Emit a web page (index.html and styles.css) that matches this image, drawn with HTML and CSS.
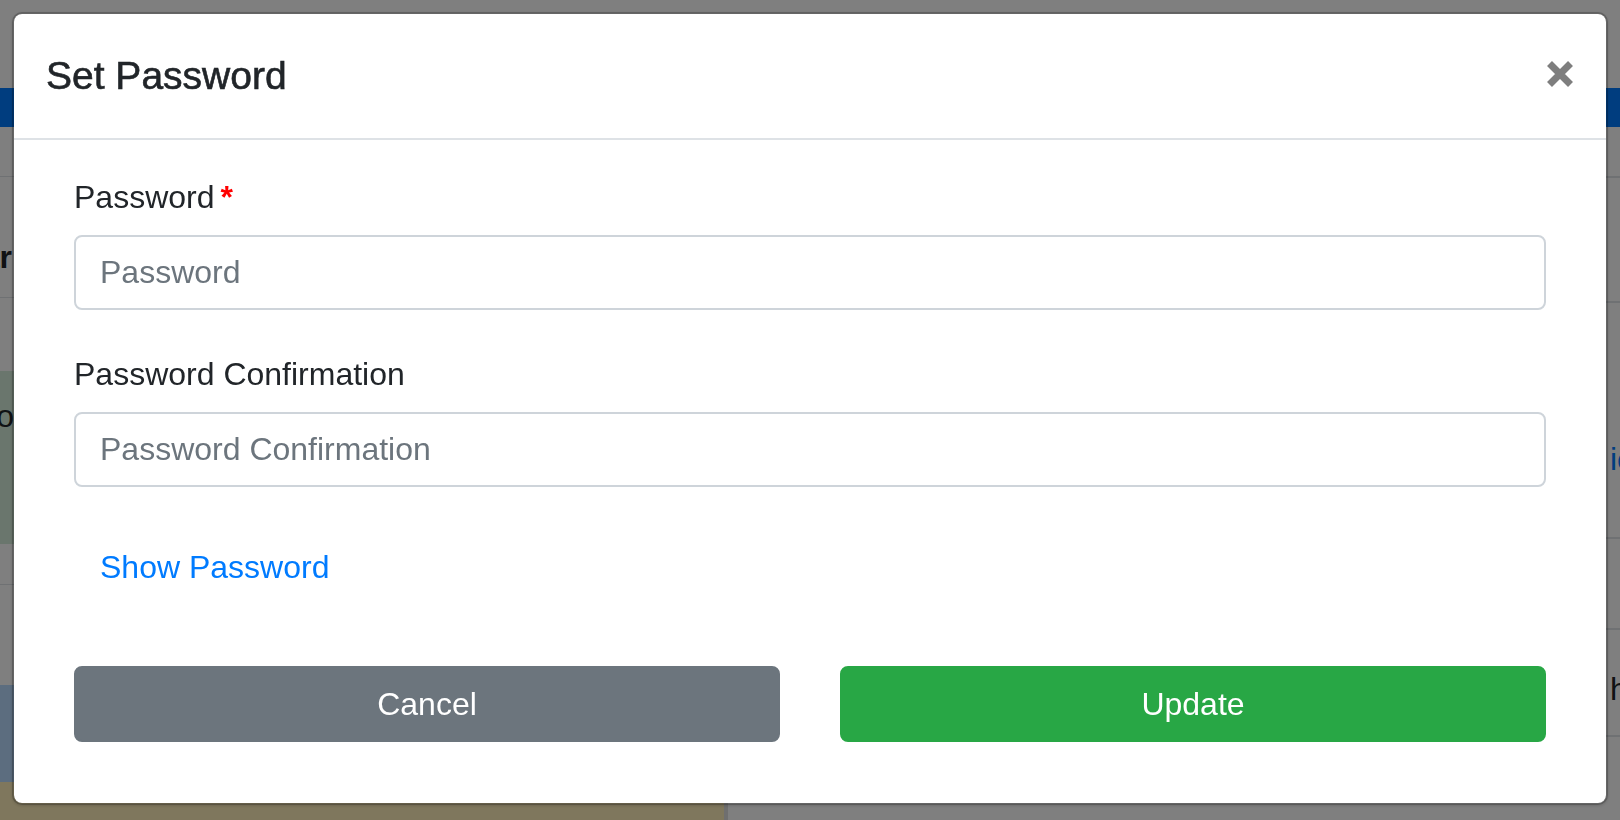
FILE: index.html
```html
<!DOCTYPE html>
<html lang="en">
<head>
<meta charset="utf-8">
<title>Set Password</title>
<link rel="stylesheet" href="styles.css">
</head>
<body>
<div class="page">
  <div class="topbar"></div>
  <div class="navbar"></div>
  <div class="content">
    <div class="col-left">
      <div class="row row-a"></div>
      <div class="row row-b"><span class="peek bold">Calendar</span></div>
      <div class="row row-c"></div>
      <div class="row row-green"><span class="peek">Do</span></div>
      <div class="row row-d"></div>
      <div class="row row-e"></div>
      <div class="row row-info"></div>
      <div class="row row-warn"></div>
    </div>
    <div class="col-mid"></div>
    <div class="col-right">
      <div class="rrow rrow-a"></div>
      <div class="rrow rrow-b"></div>
      <div class="rrow rrow-c"><span class="link-peek">ic</span></div>
      <div class="rrow rrow-d"></div>
      <div class="rrow rrow-e"><span class="text-peek">h</span></div>
      <div class="rrow rrow-f"></div>
    </div>
  </div>
</div>

<div class="overlay">
  <div class="modal">
    <div class="modal-header">
      <h5 class="modal-title">Set Password</h5>
      <button class="close" type="button" aria-label="Close">
        <svg class="close-icon" width="28" height="28" viewBox="0 0 28 28">
          <path d="M3.5 2.5 L24.5 23.5 M24.5 2.5 L3.5 23.5" stroke="#000" stroke-width="7" stroke-linecap="butt" fill="none"/>
        </svg>
      </button>
    </div>
    <div class="modal-body">
      <form class="form">
        <div class="form-group">
          <label class="label">Password<span class="req">*</span></label>
          <input class="input" type="password" placeholder="Password">
        </div>
        <div class="form-group">
          <label class="label">Password Confirmation</label>
          <input class="input" type="password" placeholder="Password Confirmation">
        </div>
        <button class="btn-link" type="button">Show Password</button>
        <div class="actions">
          <button class="btn btn-secondary" type="button">Cancel</button>
          <button class="btn btn-success" type="button">Update</button>
        </div>
      </form>
    </div>
  </div>
</div>
</body>
</html>
```

FILE: styles.css
```css
* { box-sizing: border-box; }

html, body {
  margin: 0;
  padding: 0;
  width: 1620px;
  height: 820px;
  overflow: hidden;
}

body {
  font-family: "Liberation Sans", Arial, Helvetica, sans-serif;
  color: #212529;
  background: #ffffff;
}

/* ---------- background page (behind overlay) ---------- */
.page {
  width: 1620px;
  height: 820px;
  display: flex;
  flex-direction: column;
}

.topbar { height: 88px; background: #ffffff; }
.navbar { height: 39px; background: #007bff; }

.content {
  flex: 1;
  display: flex;
}

.col-left {
  width: 724px;
  display: flex;
  flex-direction: column;
}

.row { display: flex; justify-content: flex-end; overflow: hidden; }
.row-a { height: 50px; border-bottom: 1px solid #dee2e6; }
.row-b { height: 121px; border-bottom: 1px solid #dee2e6; align-items: flex-start; padding-top: 60px; padding-right: 712px; }
.row-c { height: 73px; }
.row-green { height: 173px; background: #d4edda; align-items: flex-start; padding-top: 25px; padding-right: 710px; }
.row-d { height: 41px; border-bottom: 1px solid #dee2e6; }
.row-e { height: 100px; }
.row-info { height: 97px; background: #b8daff; }
.row-warn { flex: 1; background: #ffeeba; }

.peek {
  font-size: 32px;
  line-height: 40px;
  white-space: nowrap;
  color: #212529;
}
.peek.bold { font-weight: 700; }

.col-mid {
  width: 101px;
  display: flex;
  border-left: 2px solid #dedede;
}

.col-right {
  flex: 1;
  display: flex;
  flex-direction: column;
  border-left: 2px solid #dedede;
}

.rrow { border-bottom: 2px solid #dee2e6; display: flex; align-items: center; padding-left: 882px; overflow: hidden; }
.rrow-a { height: 51px; }
.rrow-b { height: 125px; }
.rrow-c { height: 236px; align-items: flex-start; padding-top: 138px; }
.rrow-d { height: 91px; }
.rrow-e { height: 107px; padding-top: 14px; }
.rrow-f { flex: 1; border-bottom: none; }

.link-peek { font-size: 32px; color: #007bff; white-space: nowrap; }
.text-peek { font-size: 32px; color: #212529; white-space: nowrap; }

/* ---------- modal ---------- */
.overlay {
  position: fixed;
  inset: 0;
  background: rgba(0, 0, 0, 0.5);
  padding: 12px;
}

.modal {
  width: 1596px;
  background: #ffffff;
  background-clip: padding-box;
  border: 2px solid rgba(0, 0, 0, 0.2);
  border-radius: 10px;
  box-shadow: 0 1px 3px rgba(0, 0, 0, 0.15);
  display: flex;
  flex-direction: column;
}

.modal-header {
  display: flex;
  align-items: flex-start;
  justify-content: space-between;
  padding: 32px 32px;
  border-bottom: 2px solid #dee2e6;
}

.modal-title {
  margin: 0;
  font-size: 39px;
  line-height: 60px;
  font-weight: 500;
  color: #212529;
  -webkit-text-stroke: 0.6px #212529;
}

.close {
  background: transparent;
  border: 0;
  padding: 0;
  margin: 15px 0 0 auto;
  width: 28px;
  height: 28px;
  opacity: 0.5;
  cursor: pointer;
  display: block;
}

.close-icon { display: block; }

.modal-body {
  padding: 33px 60px 61px 60px;
}

.form {
  display: flex;
  flex-direction: column;
  margin: 0;
}

.form-group {
  display: flex;
  flex-direction: column;
  margin-bottom: 40px;
}

.label {
  display: block;
  font-size: 32px;
  line-height: 48px;
  margin-bottom: 14px;
  color: #212529;
}

.req {
  color: #ff0000;
  font-weight: 700;
  margin-left: 6px;
}

.input {
  display: block;
  width: 100%;
  height: 75px;
  padding: 0 24px;
  border: 2px solid #ced4da;
  border-radius: 8px;
  font-family: inherit;
  font-size: 32px;
  color: #495057;
  background: #ffffff;
  outline: none;
}

.input::placeholder {
  color: #6c757d;
  opacity: 1;
}

.btn-link {
  align-self: flex-start;
  margin-top: 2px;
  padding: 12px 24px;
  border: 2px solid transparent;
  background: transparent;
  font-family: inherit;
  font-size: 32px;
  line-height: 48px;
  color: #007bff;
  cursor: pointer;
}

.actions {
  margin-top: 61px;
  display: grid;
  grid-template-columns: 1fr 1fr;
  column-gap: 60px;
}

.btn {
  padding: 12px 24px;
  border: 2px solid transparent;
  border-radius: 8px;
  font-family: inherit;
  font-size: 32px;
  line-height: 48px;
  color: #ffffff;
  text-align: center;
  cursor: pointer;
}

.btn-secondary { background: #6c757d; border-color: #6c757d; }
.btn-success { background: #28a745; border-color: #28a745; }
```
